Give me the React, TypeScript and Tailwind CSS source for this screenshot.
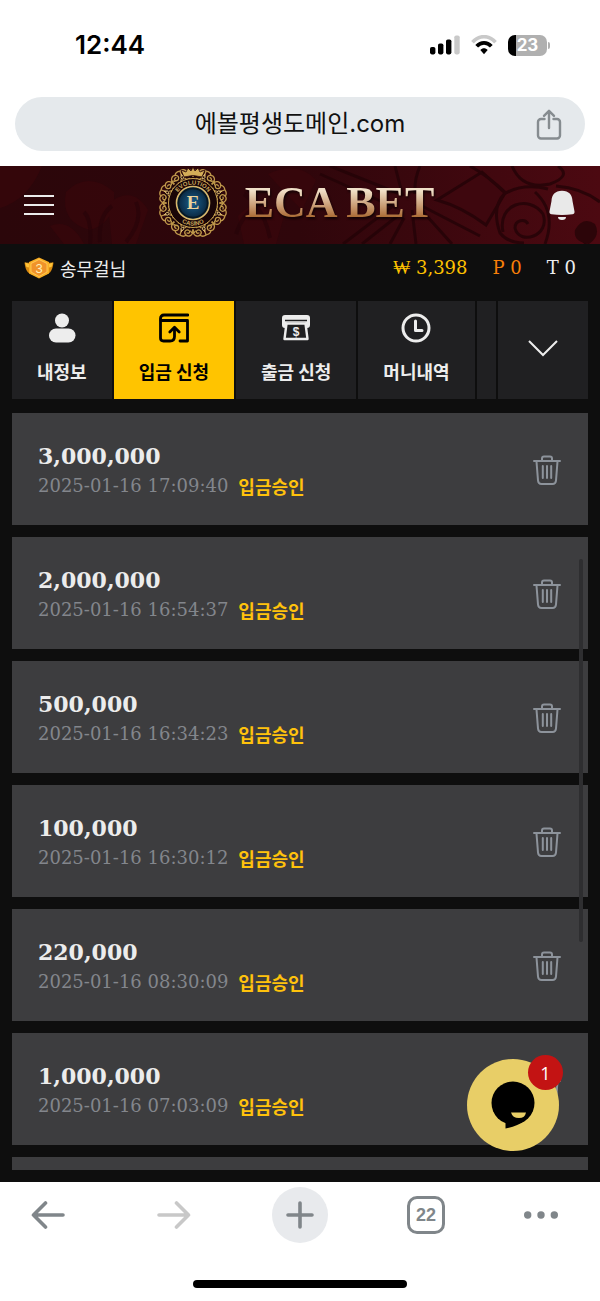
import React, { useState } from 'react';

interface Deposit {
  amount: string;
  date: string;
}

const DEPOSITS: Deposit[] = [
  { amount: '3,000,000', date: '2025-01-16 17:09:40' },
  { amount: '2,000,000', date: '2025-01-16 16:54:37' },
  { amount: '500,000', date: '2025-01-16 16:34:23' },
  { amount: '100,000', date: '2025-01-16 16:30:12' },
  { amount: '220,000', date: '2025-01-16 08:30:09' },
  { amount: '1,000,000', date: '2025-01-16 07:03:09' },
];

const LOBES = Array.from({ length: 8 }, (_, i) => i * 45 + 22.5);

function StatusBar() {
  return (
    <div className="flex h-[90px] items-center justify-between pl-[75px] pr-[50px]">
      <span className="text-[26px] font-semibold leading-8">12:44</span>
      <div className="flex items-center gap-[11px]">
        <svg viewBox="0 0 30 20" className="h-5 w-[30px]">
          <rect x="0" y="12" width="5.4" height="7.4" rx="1.8" />
          <rect x="8" y="8.5" width="5.4" height="10.9" rx="1.8" />
          <rect x="16" y="4.5" width="5.4" height="14.9" rx="1.8" />
          <rect x="24.3" y="0.5" width="5.4" height="18.9" rx="1.8" fill="#c9c9c9" />
        </svg>
        <svg viewBox="0 0 26 20" className="h-5 w-[26px]" fill="none">
          <path d="M1.5 7.2C8-.2 18-.2 24.5 7.2" stroke="#c9c9c9" strokeWidth="3.6" />
          <path d="M5.7 11.3c4.3-4.6 10.3-4.6 14.6 0" stroke="#000" strokeWidth="3.8" />
          <path d="M9.3 15c2.3-2.2 5.1-2.2 7.4 0L13 19.2z" fill="#000" />
        </svg>
        <div className="flex items-center gap-px">
          <div className="flex h-[21px] w-[39px] items-center justify-center rounded-[7px] bg-[linear-gradient(90deg,#000_8px,#b0b0b0_8px)]">
            <span className="text-[17px] font-bold leading-5 text-white">23</span>
          </div>
          <div className="h-[7px] w-[2px] rounded-r-full bg-[#b0b0b0]" />
        </div>
      </div>
    </div>
  );
}

function AddressBar() {
  return (
    <div className="mx-[15px] mb-[15px] mt-[7px] flex h-[54px] items-center rounded-full bg-[#e5e9ec] pl-[50px] pr-[22px]">
      <input
        type="text"
        aria-label="주소"
        defaultValue="에볼평생도메인.com"
        className="min-w-0 flex-1 bg-transparent text-center text-2xl text-[#111] outline-none"
      />
      <button aria-label="공유" className="shrink-0">
        <svg viewBox="0 0 28 34" className="h-[34px] w-7" fill="none" stroke="#868c90" strokeWidth="2.4" strokeLinecap="round" strokeLinejoin="round">
          <path d="M9.5 12H6a3 3 0 0 0-3 3v13.500a3 3 0 0 0 3 3h16a3 3 0 0 0 3-3V15a3 3 0 0 0-3-3h-3.500" />
          <path d="M14 21V4M9 8.800l5-5 5 5" />
        </svg>
      </button>
    </div>
  );
}

function HeaderPattern() {
  return (
    <svg viewBox="0 0 600 78" preserveAspectRatio="xMidYMid slice" className="absolute inset-0 h-full w-full" fill="none">
      <g fill="#3d060b" opacity="0.5">
        <path d="M0 0h42Q28 34 0 42z" />
        <path d="M66 26q22-22 48 0 2 30-24 38-30-8-24-38z" />
        <path d="M108 38q24-20 40 6l-12 34h-24z" />
        <path d="M50 60q20-8 34 18H64z" />
        <path d="M238 50q22-24 46 0l-8 28h-32z" />
        <path d="M268 8q30-14 48 6l-14 30q-20-20-34-36z" />
      </g>
      <g stroke="#24040a" strokeWidth="4" opacity="0.55">
        <path d="M84 46q8 8 6 32M112 40q-14 10-12 36M136 36q8 18-10 40M236 68q8-24 26-30M270 72q-6-30-26-44" />
      </g>
      <g stroke="#230307" strokeWidth="3" opacity="0.8">
        <path d="M437 34 482 6l23 21-19 32q-24-18-49-25z" fill="#3e070e" />
        <path d="M395 0q4 16 8 30M420 0q-6 14-5 28M320 8l76 34M330 0l70 28M343 78l50-38M362 78l38-30M390 78l14-26M416 78l-4-34M452 78l-36-40M480 70l-62-32" />
        <path d="M470 0q18 10 36 27 18-10 42-4M505 27q-14 14-5 40 8 10 24 10" />
        <path d="M503 66c-6-28 26-38 40-18 8 22-24 32-28 14 0-8 10-10 13-4" />
        <path d="M512 0q10 24 38 18 22-8 8-18M535 26q22 20 10 52M556 20q26 2 44 16M586 78q-10-12 4-20" />
      </g>
      <path d="M575 64q8-14 20-6 6 12-6 20-16-2-14-14z" fill="#2c0509" />
    </svg>
  );
}

function Emblem() {
  return (
    <svg viewBox="-36 -36 72 72" className="h-[72px] w-[72px] shrink-0" fill="none">
      <defs>
        <radialGradient id="gem">
          <stop offset="0" stopColor="#1a5f8e" />
          <stop offset="1" stopColor="#082137" />
        </radialGradient>
        <path id="arcTop" d="M-18.500 0a18.500 18.500 0 0 1 37 0" />
        <path id="arcBottom" d="M-22.500 0a22.500 22.500 0 0 0 45 0" />
      </defs>
      <circle r="30" fill="#1d0508" />
      <g stroke="#bf984b" strokeWidth="1.300" strokeLinecap="round">
        {LOBES.map((deg) => (
          <g key={deg} transform={`rotate(${deg})`}>
            <path d="M-10-25c-3-5 1-9 5-7 3 2 1 6-2 5-2-1-1-3 1-3M10-25c3-5-1-9-5-7-3 2-1 6 2 5 2-1 1-3-1-3" />
            <path d="M-6-32.500q2-3 6-2 4-1 6 2M-2-26q-1 3-4 2M2-26q1 3 4 2" />
            <path d="M0-34v5M-11-28q-2 1-2 3M11-28q2 1 2 3" />
            <path d="M-1.500-28 0-31l1.500 3-1.500 2z" stroke="#e6c67c" strokeWidth="0.8" />
          </g>
        ))}
      </g>
      <circle r="24.500" fill="#190507" stroke="#cda653" strokeWidth="1" />
      <circle r="16.500" fill="url(#gem)" stroke="#d9b86c" strokeWidth="1.600" />
      <circle r="14.500" stroke="#071722" strokeWidth="1.400" />
      <path d="M-9-26l-3-7 5 2 2-4 3 3 2-4 2 4 3-3 2 4 5-2-3 7q-9-3-18 0z" fill="#d3ad58" stroke="#2a0709" strokeWidth="0.8" />
      <g fill="#c9a65c" className="font-['Liberation_Sans'] text-[6px] font-bold">
        <text textAnchor="middle">
          <textPath href="#arcTop" startOffset="50%">EVOLUTION</textPath>
        </text>
        <text textAnchor="middle">
          <textPath href="#arcBottom" startOffset="50%">CASINO</textPath>
        </text>
      </g>
      <text y="6" textAnchor="middle" fill="#edd39a" className="font-['Liberation_Serif'] text-[19px] font-bold">E</text>
    </svg>
  );
}

function SiteHeader() {
  return (
    <header className="relative flex h-[78px] items-center justify-between overflow-hidden bg-linear-to-r from-[#2b060a] via-[#2f060b] to-[#4c0911] pl-6 pr-[25px]">
      <HeaderPattern />
      <button aria-label="메뉴" className="relative flex w-[30px] flex-col gap-[7px]">
        <span className="h-[2px] bg-[#ececec]" />
        <span className="h-[2px] bg-[#ececec]" />
        <span className="h-[2px] bg-[#ececec]" />
      </button>
      <a href="#" className="relative flex items-center gap-4 pb-1 pr-3">
        <Emblem />
        <span className="bg-linear-to-b from-[#f0e0c8] from-25% to-[#a8682f] to-80% bg-clip-text font-['Liberation_Serif'] text-[44px] font-bold leading-[50px] text-transparent drop-shadow-[1px_2px_1px_#000000aa]">
          ECA BET
        </span>
      </a>
      <button aria-label="알림" className="relative">
        <svg viewBox="0 0 26 30" className="h-[30px] w-[26px]" fill="#e9e9e9">
          <path d="M13 .8C6 .8 2.800 5 2.500 11L.5 21.500c-.2 1.800.8 2.500 2 2.700 7 1.100 14 1.100 21 0 1.200-.2 2.200-.9 2-2.700L23.500 11C23.200 5 20 .8 13 .8z" />
          <path d="M9 27h8q0 3-4 3t-4-3z" />
        </svg>
      </button>
    </header>
  );
}

function UserBar() {
  return (
    <div className="flex h-12 items-center justify-between px-6 text-lg leading-6">
      <div className="flex items-center gap-[6px]">
        <svg viewBox="0 0 30 22" className="h-[22px] w-[30px]">
          <path d="M.5 5.500 9 6v12l-5-2.500C2 13 1 10 .5 5.500zM29.500 5.500 21 6v12l5-2.500c2-2.500 3-5.500 3.500-10z" fill="#d98a10" />
          <path d="M1 5.500 8 8v3l-5.500-1zM29 5.500 22 8v3l5.500-1z" fill="#ffc43a" />
          <path d="M15 .5 25 5v11.500L15 21.500 5 16.500V5z" fill="#f9ae25" />
          <path d="M15 2.500 23 6.500v8.500L15 19.500 7 15V6.500z" fill="#f0932a" stroke="#ffd25c" strokeWidth="0.8" />
          <text x="15" y="15.500" textAnchor="middle" fill="#fff0b8" className="font-['Liberation_Sans'] text-[13px]">3</text>
        </svg>
        <span className="text-[#ededed]">송무걸님</span>
      </div>
      <div className="flex items-center gap-[25px] font-['DejaVu_Serif']">
        <span className="text-[#ffc200]">₩ 3,398</span>
        <span className="text-[#f77f08]">P 0</span>
        <span className="text-[#ededed]">T 0</span>
      </div>
    </div>
  );
}

const TABS = [
  {
    label: '내정보',
    icon: (
      <g fill="currentColor">
        <circle cx="15" cy="7.500" r="7" />
        <rect x="2" y="15.500" width="26.500" height="14" rx="7" />
      </g>
    ),
  },
  {
    label: '입금 신청',
    icon: (
      <g fill="none" stroke="currentColor" strokeWidth="2.800" strokeLinecap="round" strokeLinejoin="round">
        <path d="M29 2H5Q1.500 2 1.500 5.500V25q0 3 3 3H11q4.500 0 4.500-4.500V16" />
        <path d="M2 7.500h26.500V28H21M10.800 19l4.700-4.700 4.700 4.700" />
      </g>
    ),
  },
  {
    label: '출금 신청',
    icon: (
      <g>
        <path d="M4 2h22q3 0 3 3v7q0 3-3 3h-1.500V9.500h-19V15H4q-3 0-3-3V5q0-3 3-3z" fill="currentColor" />
        <path d="M4 7.500h22" stroke="#202022" strokeWidth="1.500" />
        <path d="M5.500 10.500h19l2 15.500h-23z" fill="#202022" stroke="currentColor" strokeWidth="2.400" strokeLinejoin="round" />
        <text x="15" y="22.500" textAnchor="middle" fill="currentColor" className="font-['Liberation_Sans'] text-[12px] font-bold">$</text>
      </g>
    ),
  },
  {
    label: '머니내역',
    icon: (
      <g fill="none" stroke="currentColor" strokeWidth="3" strokeLinecap="round" strokeLinejoin="round">
        <circle cx="15" cy="15" r="13" />
        <path d="M14.500 8v9.500H21" />
      </g>
    ),
  },
];

function TabStrip() {
  const [active, setActive] = useState('입금 신청');

  return (
    <nav className="mx-3 mt-[9px] flex gap-[2px] text-lg font-bold">
      <div className="flex min-w-0 flex-1 gap-[2px] overflow-hidden">
        {TABS.map((tab) => (
          <button
            key={tab.label}
            onClick={() => setActive(tab.label)}
            className={
              tab.label === active
                ? 'flex shrink-0 flex-col items-center gap-3 bg-[#ffc400] px-[25px] py-3 text-black'
                : 'flex shrink-0 flex-col items-center gap-3 bg-[#202022] px-[25px] py-3 text-[#ededed]'
            }
          >
            <svg viewBox="0 0 30 30" className="h-[30px] w-[30px]">{tab.icon}</svg>
            <span className="leading-8">{tab.label}</span>
          </button>
        ))}
        <div className="flex-1 bg-[#202022]" />
      </div>
      <button aria-label="더보기" className="flex w-[90px] shrink-0 items-center justify-center bg-[#202022]">
        <svg viewBox="0 0 30 22" className="h-[22px] w-[30px]" fill="none" stroke="#ededed" strokeWidth="2">
          <path d="M1 2l14 14L29 2" />
        </svg>
      </button>
    </nav>
  );
}

function TrashIcon() {
  return (
    <svg viewBox="0 0 28 30" className="h-[30px] w-7" fill="none" stroke="#8d939b" strokeWidth="2" strokeLinecap="round" strokeLinejoin="round">
      <path d="M1 6h26M9 5.500V3.500q0-2 2-2h6q2 0 2 2v2" />
      <path d="M3.500 6.500 5 25.500q.3 3.500 3.500 3.500h11q3.200 0 3.500-3.500l1.500-19" />
      <path d="M9.800 11v12M14 11v12M18.200 11v12" />
    </svg>
  );
}

function DepositCard({ amount, date }: Deposit) {
  return (
    <li className="flex items-center justify-between bg-[#3d3d3f] pb-[25px] pl-[26px] pr-[27px] pt-[27px]">
      <div>
        <p className="font-['DejaVu_Serif'] text-[22px] font-bold leading-8 text-[#ececec]">{amount}</p>
        <p className="flex gap-[10px] text-lg leading-7">
          <span className="font-['DejaVu_Serif'] text-[#83868c]">{date}</span>
          <span className="font-bold text-[#ffc20c]">입금승인</span>
        </p>
      </div>
      <button aria-label="삭제">
        <TrashIcon />
      </button>
    </li>
  );
}

function ChatBubble() {
  return (
    <button aria-label="채팅" className="absolute bottom-[31px] right-[41px] flex h-[92px] w-[92px] items-center justify-center rounded-full bg-[#e8ce67]">
      <svg viewBox="0 0 44 48" className="h-12 w-11">
        <circle cx="22" cy="22" r="21.500" />
        <path d="M14.500 38v9.500q11-2 20-8z" />
        <path d="M20 31.500h15q-1 5.500-7 5.500-6.500 0-8-5.500z" fill="#e8ce67" />
      </svg>
      <span className="absolute -right-1 -top-1 flex h-[35px] w-[35px] items-center justify-center rounded-full bg-[#c31313] font-['Open_Sans'] text-lg text-white">
        1
      </span>
    </button>
  );
}

function BrowserToolbar() {
  return (
    <footer className="flex flex-col items-center bg-white pb-[13px] text-[#80868a]">
      <div className="flex w-full items-center justify-between px-5 pt-[5px]">
        <button aria-label="뒤로" className="flex h-14 w-14 items-center justify-center">
          <svg viewBox="0 0 34 28" className="h-7 w-[34px]" fill="none" stroke="currentColor" strokeWidth="3.600" strokeLinecap="round" strokeLinejoin="round">
            <path d="M32 14H2.500M14.500 2l-12 12 12 12" />
          </svg>
        </button>
        <button aria-label="앞으로" className="flex h-14 w-14 items-center justify-center text-[#c8c8c8]">
          <svg viewBox="0 0 34 28" className="h-7 w-[34px]" fill="none" stroke="currentColor" strokeWidth="3.600" strokeLinecap="round" strokeLinejoin="round">
            <path d="M2 14h29.500M19.500 2l12 12-12 12" />
          </svg>
        </button>
        <button aria-label="새 탭" className="flex h-14 w-14 items-center justify-center rounded-full bg-[#e8eaed]">
          <svg viewBox="0 0 28 28" className="h-7 w-7" fill="none" stroke="currentColor" strokeWidth="3.600" strokeLinecap="round">
            <path d="M14 2v24M2 14h24" />
          </svg>
        </button>
        <button className="flex h-14 w-14 items-center justify-center">
          <span className="flex h-[38px] w-[38px] items-center justify-center rounded-[10px] border-[3px] border-[#80868a] font-['Liberation_Sans'] text-lg font-bold">
            22
          </span>
        </button>
        <button aria-label="메뉴 더보기" className="flex h-14 w-14 items-center">
          <svg viewBox="0 0 34 8" className="h-2 w-[34px]" fill="currentColor">
            <circle cx="3.700" cy="4" r="3.700" />
            <circle cx="17" cy="4" r="3.700" />
            <circle cx="30.300" cy="4" r="3.700" />
          </svg>
        </button>
      </div>
      <div className="mt-[37px] h-2 w-[214px] rounded-full bg-black" />
    </footer>
  );
}

export default function App() {
  return (
    <div className="bg-white font-['Inter','Noto_Sans_CJK_KR',sans-serif] text-black">
      <StatusBar />
      <AddressBar />
      <main className="relative bg-[#0e0e0e] pb-3 font-['Noto_Sans_CJK_KR',sans-serif]">
        <SiteHeader />
        <UserBar />
        <TabStrip />
        <ul className="mx-3 mt-[14px] flex flex-col gap-3">
          {DEPOSITS.map((d) => (
            <DepositCard key={d.date} {...d} />
          ))}
          <li className="h-[13px] bg-[#3d3d3f]" />
        </ul>
        {/* Scroll thumb */}
        <div className="absolute bottom-60 right-[17px] top-[393px] w-1 rounded-full bg-[#2e2e30]" />
        <ChatBubble />
      </main>
      <BrowserToolbar />
    </div>
  );
}
